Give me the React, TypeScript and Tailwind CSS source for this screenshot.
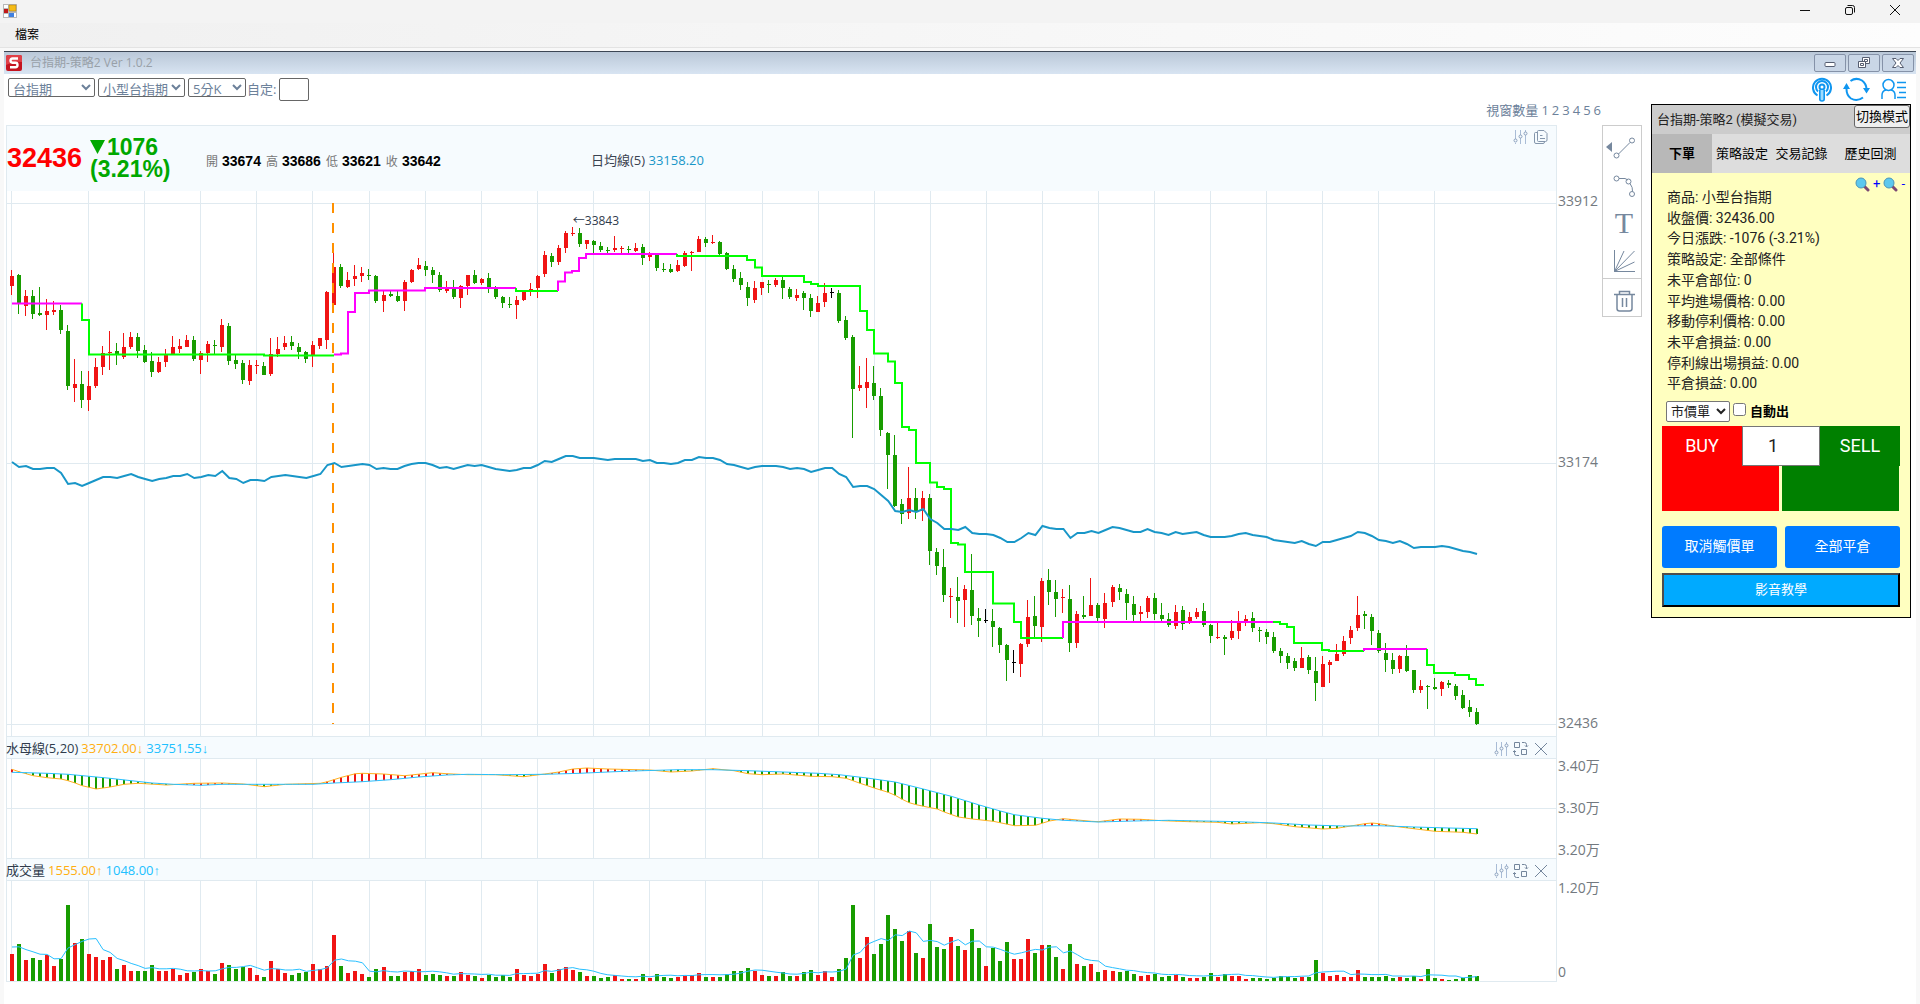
import { useState } from "react";
import type { ReactNode } from "react";

// [color, high, bodyTop, bodyBottom, low]
const CANDLES = `
r 270 276 286 295|g 274 275 303 314|r 290 296 306 316|g 290 296 314 319|g 287 313 315 316|r 299 311 315 330|r 301 310 312 315|g 305 310 330 334|g 325 331 386 390|r 359 384 388 402
g 371 384 400 408|r 371 386 400 411|r 358 367 386 388|r 346 353 367 375|r 331 352 353 370|g 343 351 355 365|r 333 347 357 359|r 332 337 347 349|g 333 337 351 358|g 345 350 362 363
g 352 361 372 377|r 357 362 372 373|r 349 355 362 367|r 336 347 355 355|r 339 346 349 353|r 335 340 347 347|g 336 340 359 361|r 351 353 360 374|r 341 344 353 362|g 340 345 346 354
r 319 325 347 352|g 323 326 361 365|g 355 360 364 369|g 360 363 380 384|r 360 365 381 385|r 360 365 366 374|g 362 366 375 375|r 338 354 374 376|r 337 349 354 357|r 336 343 347 350
g 336 342 346 350|g 343 347 352 359|g 351 352 359 363|r 341 345 355 367|r 338 338 346 349|r 291 292 340 349|r 253 267 305 305|g 264 267 286 288|r 272 280 287 288|r 265 276 279 286
r 267 273 276 282|g 269 275 276 280|g 275 276 301 303|r 291 295 301 312|g 290 294 296 297|g 290 296 301 302|r 280 282 301 311|r 269 270 282 283|r 258 265 269 270|g 261 266 270 276
g 267 270 275 283|g 272 275 290 292|r 281 289 291 293|g 280 288 297 299|r 285 286 298 308|r 275 275 286 295|g 270 275 283 284|r 278 279 283 285|g 273 278 288 293|g 286 288 297 299
g 296 297 303 308|g 297 304 305 308|r 296 300 305 319|r 290 291 300 301|r 283 289 290 296|r 275 276 288 298|r 251 255 274 277|g 253 256 262 267|r 245 248 262 265|r 231 233 248 253
r 227 233 234 236|g 228 233 244 247|r 240 240 244 249|g 240 241 245 253|g 242 246 250 252|g 247 250 251 254|r 236 248 250 252|r 246 248 249 253|g 246 249 250 253|r 243 248 251 252
g 244 247 258 265|r 252 255 257 261|g 254 255 268 271|g 263 269 270 272|g 264 269 272 273|r 260 265 271 272|r 251 253 266 267|r 251 252 253 271|r 236 239 252 252|g 237 239 243 247
r 235 242 243 244|g 241 242 254 255|g 252 253 269 270|g 265 269 279 282|g 272 278 285 290|g 282 287 298 306|r 281 288 300 303|r 282 282 288 295|g 280 284 285 293|r 278 280 285 287
g 277 280 288 299|g 287 289 297 299|r 289 295 298 301|g 291 293 298 310|g 294 298 311 317|r 296 303 312 312|r 283 293 302 307|k 288 292 293 298|g 290 293 321 323|g 316 320 338 340
g 335 337 389 438|r 366 385 388 391|r 358 382 388 408|g 366 383 396 400|g 388 396 430 436|g 432 433 455 489|g 435 455 506 507|g 499 504 514 524|r 467 498 513 519|g 488 498 512 519
r 491 498 511 521|g 494 498 551 565|g 548 552 566 575|g 549 567 595 602|r 588 596 597 618|g 577 597 601 623|r 585 589 600 627|g 554 590 616 625|g 608 618 621 637|k 609 620 621 623
g 609 621 627 647|g 627 628 645 653|g 644 645 660 681|k 650 662 663 673|r 643 644 664 677|r 600 617 644 647|g 596 616 626 637|r 578 581 627 642|g 569 580 592 605|g 580 592 599 617
r 589 597 598 613|g 585 599 643 652|r 611 614 643 648|g 596 615 617 619|r 578 605 616 616|g 603 605 618 623|r 593 603 619 628|r 585 587 602 607|g 584 588 592 600|g 589 594 603 620
g 596 604 615 623|r 606 612 614 621|r 596 598 612 618|g 593 598 614 620|g 603 615 619 621|g 613 619 625 627|r 605 612 626 629|g 606 610 624 630|r 612 617 622 624|r 608 612 617 619
g 603 611 625 627|g 624 625 636 643|r 622 637 638 639|g 635 637 639 655|r 620 631 638 640|r 611 622 631 639|r 615 619 622 626|g 612 618 628 632|g 627 630 631 642|g 629 632 637 644
g 632 637 651 653|g 648 651 656 663|g 653 656 663 669|g 658 661 668 671|r 647 658 668 668|g 655 657 670 674|g 657 671 683 701|r 656 664 687 687|r 660 662 665 683|r 644 654 661 661
r 636 641 654 656|r 626 630 638 644|r 596 615 628 631|g 611 614 616 629|g 614 617 631 645|g 630 633 651 653|g 643 653 660 672|g 653 660 669 674|r 655 656 669 673|g 645 656 671 672
g 670 670 690 693|r 680 686 690 693|g 685 686 687 709|g 678 687 689 690|r 681 682 689 696|g 680 683 685 688|g 684 686 696 700|g 690 695 708 709|g 700 707 712 717|g 708 712 724 725`
  .trim()
  .split(/[|\n]/)
  .map((row) => {
    const [color, ...v] = row.split(" ");
    const [high, top, bottom, low] = v.map(Number);
    return { color, high, top, bottom, low };
  });

const VOLUMES = [
  27, 37, 21, 23, 21, 26, 15, 22, 76, 38, 42, 27, 24, 21, 24, 12, 16, 10, 10, 10,
  16, 10, 10, 12, 6, 8, 9, 12, 10, 7, 18, 16, 12, 14, 13, 6, 4, 20, 12, 8,
  6, 8, 9, 17, 12, 15, 46, 15, 8, 10, 7, 4, 12, 14, 5, 5, 9, 10, 12, 6,
  7, 6, 5, 5, 9, 6, 5, 3, 6, 4, 6, 4, 12, 6, 5, 7, 17, 8, 12, 14,
  11, 9, 5, 5, 3, 4, 6, 2, 2, 2, 7, 3, 7, 4, 3, 4, 5, 6, 8, 4,
  4, 4, 7, 10, 10, 13, 10, 6, 5, 5, 9, 5, 5, 9, 11, 6, 10, 4, 12, 23,
  76, 23, 44, 27, 37, 66, 52, 40, 50, 28, 23, 57, 34, 32, 44, 35, 31, 52, 33, 15,
  33, 20, 39, 22, 22, 42, 28, 36, 36, 24, 12, 37, 17, 15, 17, 9, 11, 10, 9, 10,
  7, 5, 6, 7, 4, 5, 6, 4, 3, 3, 4, 8, 4, 7, 5, 5, 2, 3, 3, 2,
  3, 5, 4, 3, 4, 4, 21, 8, 5, 6, 4, 4, 11, 4, 4, 4, 5, 3, 4, 3,
  5, 2, 12, 3, 2, 1, 2, 3, 6, 5,
];

const DAILY_MA = [
  462, 467, 466, 469, 469, 468, 468, 473, 484, 483, 486, 483, 480, 477, 477, 478, 476, 474, 477, 479,
  481, 479, 478, 476, 476, 474, 478, 477, 475, 476, 471, 478, 479, 483, 480, 480, 481, 477, 476, 475,
  476, 477, 478, 476, 474, 465, 463, 467, 466, 465, 464, 465, 469, 468, 469, 469, 466, 464, 463, 463,
  465, 468, 467, 469, 467, 465, 466, 465, 467, 469, 470, 471, 470, 468, 468, 465, 461, 462, 459, 456,
  456, 458, 458, 458, 459, 460, 459, 459, 459, 459, 461, 460, 463, 463, 464, 463, 460, 460, 457, 458,
  458, 460, 464, 465, 467, 469, 467, 466, 466, 466, 467, 469, 468, 469, 472, 470, 468, 468, 474, 477,
  487, 486, 486, 489, 495, 501, 511, 512, 510, 512, 509, 519, 523, 529, 529, 530, 527, 533, 534, 534,
  535, 538, 542, 542, 538, 533, 535, 526, 528, 529, 529, 538, 533, 533, 531, 533, 530, 527, 528, 530,
  532, 532, 529, 532, 533, 535, 532, 534, 533, 532, 535, 537, 537, 537, 536, 534, 533, 535, 536, 537,
  540, 541, 542, 543, 541, 544, 546, 542, 542, 540, 538, 536, 532, 533, 536, 540, 541, 543, 541, 544,
  548, 547, 547, 547, 546, 547, 549, 551, 552, 554,
];

// [index, y] key points, values between them are interpolated
const FAST_LINE = [
  [0, 39.3], [1, 41.7], [3, 45.7], [5, 47.7], [7, 49], [8, 50.7], [9, 53], [10, 55.7], [11, 57.3], [12, 59],
  [14, 57], [16, 54.3], [18, 53.3], [22, 55], [26, 53.3], [30, 53], [33, 54], [36, 56.7], [39, 54.3], [44, 53.3],
  [45, 51.7], [47, 47.3], [49, 43.7], [50, 43.3], [53, 44], [56, 45.7], [60, 42.7], [62, 43.7], [65, 44.7], [69, 44.7],
  [73, 46.7], [76, 44], [78, 42], [80, 39], [82, 38], [85, 39], [91, 40], [94, 42], [97, 41], [100, 38.7],
  [103, 40.7], [105, 43.7], [107, 44.7], [110, 44], [114, 46.3], [117, 46.7], [119, 48.3], [121, 53.3], [123, 58], [125, 62.3],
  [126, 65.3], [127, 69.3], [128, 72.7], [129, 74.7], [131, 77.7], [132, 79], [133, 82], [135, 87], [137, 89], [140, 91.3],
  [143, 95.7], [146, 95.3], [148, 91], [150, 88.7], [154, 91.3], [155, 91.7], [158, 89], [161, 89.3], [164, 90.7], [168, 91.7],
  [172, 92.3], [174, 94], [178, 92.7], [180, 93.7], [183, 96.7], [187, 99], [189, 98.3], [191, 96], [193, 93.7], [194, 93],
  [195, 93.7], [198, 97], [203, 101.3], [207, 102.3], [209, 104],
];
const SLOW_LINE = [
  [0, 42.3], [5, 43.3], [8, 44.3], [11, 46.3], [14, 48.3], [17, 50.7], [20, 53], [23, 54.3], [27, 55.3], [30, 54.3],
  [43, 54.3], [46, 53], [50, 51.7], [54, 49.7], [58, 47], [62, 45], [65, 44.3], [70, 44.7], [76, 44.3], [81, 43.3],
  [86, 41.7], [90, 40.7], [95, 39.7], [100, 39.7], [105, 40.7], [110, 42], [115, 43.3], [118, 44.7], [122, 48], [126, 52],
  [130, 59], [134, 66.3], [138, 75], [141, 81], [143, 84.7], [147, 88.3], [150, 90.3], [155, 92], [160, 91], [165, 90.3],
  [170, 91], [175, 91.7], [180, 93], [185, 95], [190, 96], [195, 95.7], [200, 97], [205, 98], [209, 98.7],
];

const TREND_LINES = [
  ["#ff00ff", "M5 303.5H75"],
  ["#00ff00", "M75 303.5V320H82V354.5H257V355.5H327"],
  ["#ff00ff", "M327 354.5H334V353.5H341V312H348V293H362V290.5H418V288H509"],
  ["#00ff00", "M509 288V291H551"],
  ["#ff00ff", "M551 291V281.5H558V272.5H565V271H572V258H579V254H670"],
  ["#00ff00", "M670 254V256H740V260H748V267.5H755V276H797V282H804V284H811V286H853V311H860V330H867V353.5H881V361.5H888V383H895V427H902V430H909V463H923V482.5H930V487H937V489H944V543H951V544.5H958V572H986V603.5H1007V622H1014V638H1056"],
  ["#ff00ff", "M1056 638V622H1266"],
  ["#00ff00", "M1266 622H1273V624H1280V627H1287V643H1315V650H1322V651H1357"],
  ["#ff00ff", "M1357 651V649H1420"],
  ["#00ff00", "M1420 649V665H1427V673H1448V675H1462V679H1469V685H1477"],
];

const COLORS: Record<string, string> = { r: "#f01414", g: "#189c00", k: "#000000" };
const WIDTH = 1549;
const PITCH = 7.0096;
const GRID = "#e0eaf0";

const xAt = (i: number) => 5 + i * PITCH;

const GRID_X = [4.5];
for (let i = 11; i <= 203; i += 8) GRID_X.push(Math.floor(xAt(i)) + 0.5 - (i < 51 ? 1 : 0));

function interpolate(points: number[][]) {
  return CANDLES.map((_, i) => {
    const next = points.findIndex((p) => p[0] >= i);
    if (points[next][0] === i) return points[next][1];
    const [x0, y0] = points[next - 1];
    const [x1, y1] = points[next];
    return y0 + ((y1 - y0) * (i - x0)) / (x1 - x0);
  });
}

const toPoints = (ys: number[]) => ys.map((y, i) => `${xAt(i)},${y}`).join(" ");

const fast = interpolate(FAST_LINE);
const slow = interpolate(SLOW_LINE);

// volumes before the first visible bar, needed for the 5 bar average
const history = [36, 35, 34, 33];
const volumeMa = VOLUMES.map((_, i) => {
  const all = [...history, ...VOLUMES].slice(i, i + 5);
  return 100 - all.reduce((a, b) => a + b, 0) / 5;
});

function Grid({ top, bottom, rows }: { top: number; bottom: number; rows: number[] }) {
  return (
    <g stroke={GRID}>
      {GRID_X.map((x) => (
        <line key={x} x1={x} x2={x} y1={top} y2={bottom} />
      ))}
      {rows.map((y) => (
        <line key={y} x1={0} x2={WIDTH} y1={y} y2={y} />
      ))}
    </g>
  );
}

function PriceChart() {
  return (
    <div className="relative">
      <svg viewBox={`0 191 ${WIDTH} 545`} preserveAspectRatio="none" className="block w-full h-[545px]">
        <Grid top={191} bottom={736} rows={[203.5, 463.5, 724.5]} />
        {CANDLES.map((c, i) => {
          const x = Math.round(xAt(i));
          return (
            <g key={i} fill={COLORS[c.color]}>
              <rect x={x - 1} y={c.high} width={1} height={c.low - c.high} />
              <rect x={x - 2} y={c.top} width={4} height={Math.max(1, c.bottom - c.top)} />
            </g>
          );
        })}
        <line x1={326} x2={326} y1={203} y2={724} stroke="#ff9000" strokeWidth={2} strokeDasharray="10 10" />
        {TREND_LINES.map(([color, d]) => (
          <path key={d} d={d} fill="none" stroke={color} strokeWidth={2} />
        ))}
        <polyline points={toPoints(DAILY_MA)} fill="none" stroke="#1896c8" strokeWidth={2} />
      </svg>
      <span
        className="absolute top-[20px] text-[12px] leading-[20px] text-[#2f3b4c]"
        style={{ left: `${(xAt(80) / WIDTH) * 100}%` }}
      >
        ←33843
      </span>
    </div>
  );
}

function JellyfishChart() {
  return (
    <svg viewBox={`0 0 ${WIDTH} 100`} preserveAspectRatio="none" className="block w-full h-[100px]">
      <g transform="translate(0 -28)">
        <Grid top={28} bottom={128} rows={[28.5, 78.5]} />
        {fast.map((f, i) => (
          <rect
            key={i}
            x={Math.round(xAt(i)) - 1}
            y={Math.min(f, slow[i])}
            width={2}
            height={Math.abs(f - slow[i])}
            fill={f < slow[i] ? COLORS.r : COLORS.g}
          />
        ))}
        <polyline points={toPoints(fast)} fill="none" stroke="#ffb01e" strokeWidth={1} />
        <polyline points={toPoints(slow)} fill="none" stroke="#28c0ff" strokeWidth={1} />
      </g>
    </svg>
  );
}

function VolumeChart() {
  return (
    <svg viewBox={`0 0 ${WIDTH} 101`} preserveAspectRatio="none" className="block w-full h-[101px]">
      <Grid top={0} bottom={101} rows={[0.5]} />
      {VOLUMES.map((v, i) => (
        <rect
          key={i}
          x={Math.round(xAt(i)) - 2}
          y={101 - v}
          width={4}
          height={v}
          fill={CANDLES[i].color === "g" ? COLORS.g : COLORS.r}
        />
      ))}
      <polyline points={toPoints(volumeMa)} fill="none" stroke="#28c0ff" strokeWidth={1} />
    </svg>
  );
}

function SlidersIcon() {
  return (
    <svg width="15" height="16" viewBox="0 0 15 16" fill="none" stroke="#8ba0bd">
      <path d="M2.5 1v9M2.5 14v1M7.5 1v5M7.5 9v6M12.5 1v2M12.5 6v9" stroke="#a9bcd6" />
      <circle cx="2.5" cy="11.5" r="1.5" />
      <circle cx="7.5" cy="7.5" r="1.5" />
      <circle cx="12.5" cy="4.5" r="1.5" />
    </svg>
  );
}

function PanelHeader({ children }: { children: ReactNode }) {
  return (
    <div className="flex items-center justify-between h-[22px] bg-[#f6fbfe] border-t border-[#e0eaf0] text-[13px] pt-[2px] pr-[7px] whitespace-nowrap">
      <div className="-ml-px flex gap-[3px]">{children}</div>
      <div className="flex items-center gap-1">
        <button aria-label="參數設定">
          <SlidersIcon />
        </button>
        <button aria-label="切換指標">
          <svg width="16" height="16" viewBox="0 0 16 16" fill="none" stroke="#74869c">
            <path d="M1.500 1.500h5v5h-5zM8.500 8.500h5v5h-5zM9 1.500h2.500q2 0 2 2V5.500M12 4.500l1.500 1.500L15 4.500M6 14.500H3.500q-2 0-2-2V10M0 11l1.500-1.500L3 11" />
          </svg>
        </button>
        <button aria-label="關閉">
          <svg width="16" height="16" viewBox="0 0 16 16" stroke="#74869c">
            <path d="M2 2l12 12M14 2L2 14" />
          </svg>
        </button>
      </div>
    </div>
  );
}

function Trend({ value, arrow, className }: { value: string; arrow: string; className: string }) {
  return (
    <span className={className}>
      {value}
      <span className="font-['Liberation_Sans',sans-serif] font-bold">{arrow}</span>
    </span>
  );
}

function DrawingTools() {
  return (
    <div className="w-10 shrink-0 self-start border border-[#ccc] text-[#76889e]">
      <div className="flex flex-col">
        <button aria-label="線段" className="flex h-[42px] items-center pl-[3px]">
          <svg width="30" height="24" viewBox="0 0 30 24" fill="none" stroke="#76889e">
            <path d="M6 7v10L0 12z" fill="#76889e" stroke="none" />
            <path d="M12.500 19L24 7.500" />
            <circle cx="10.500" cy="20.500" r="2.500" />
            <circle cx="26" cy="5.500" r="2.500" />
          </svg>
        </button>
        <button aria-label="曲線" className="flex h-9 items-center pl-[10px]">
          <svg width="24" height="24" viewBox="0 0 24 24" fill="none" stroke="#76889e">
            <path d="M6 4.500h6l3 1.500M17 9.500q3 4 2.500 8" />
            <circle cx="3.500" cy="4.500" r="2.500" />
            <circle cx="15.500" cy="7.500" r="2.500" />
            <circle cx="19" cy="20" r="2.500" />
          </svg>
        </button>
        <button aria-label="文字" className="h-[38px] font-['Liberation_Serif',serif] text-[30px] leading-[38px] pl-1">
          T
        </button>
        <button aria-label="扇形線" className="flex h-9 items-center pl-[10px] pt-[2px]">
          <svg width="22" height="24" viewBox="0 0 22 24" fill="none" stroke="#76889e">
            <path d="M1.500 1v21.500H22M1.500 22.500L11 2M1.500 22.500L21.500 2M1.500 22.500L21.500 13" />
          </svg>
        </button>
        <button aria-label="清除" className="flex h-[38px] items-center border-t border-[#ccc] pl-[11px] pt-[6px]">
          <svg width="21" height="22" viewBox="0 0 21 22" fill="none" stroke="#76889e">
            <path d="M0 4.500h21M5.500 4V1.500h10V4" strokeWidth="1.500" />
            <path d="M3 5v13.500q0 2.500 2.500 2.500h10q2.500 0 2.500-2.500V5" strokeWidth="1.500" />
            <path d="M8.500 8v9M12.500 8v9" strokeWidth="1.500" />
          </svg>
        </button>
      </div>
    </div>
  );
}

function SearchIcon() {
  return (
    <svg width="15" height="15" viewBox="0 0 15 15">
      <path d="M9 9l4 4" stroke="#7c4a72" strokeWidth="3" strokeLinecap="round" />
      <circle cx="6" cy="6" r="5" fill="#5cc8ee" stroke="#4a94b8" strokeWidth="1" />
    </svg>
  );
}

const INFO = [
  "商品: 小型台指期",
  "收盤價: 32436.00",
  "今日漲跌: -1076 (-3.21%)",
  "策略設定: 全部條件",
  "未平倉部位: 0",
  "平均進場價格: 0.00",
  "移動停利價格: 0.00",
  "未平倉損益: 0.00",
  "停利線出場損益: 0.00",
  "平倉損益: 0.00",
];

const TABS = ["下單", "策略設定", "交易記錄", "歷史回測"];

function OrderPanel() {
  const [tab, setTab] = useState("下單");
  const [quantity, setQuantity] = useState("1");

  return (
    <aside className="w-[260px] shrink-0 self-start border border-black bg-[#ffffc0] font-['Roboto','Noto_Sans_CJK_TC',sans-serif] text-[#222]">
      <div className="flex h-[29px] items-start justify-between bg-[#ccc] pl-[5px]">
        <h2 className="text-[13px] leading-[29px]">台指期-策略2 (模擬交易)</h2>
        <button className="h-[23px] w-[56px] rounded-[3px] border border-[#666] bg-[#efefef] text-[13px] leading-5 whitespace-nowrap text-black">
          切換模式
        </button>
      </div>
      <div className="grid grid-cols-[60px_60px_59px_79px] h-[39px] bg-[#ddd] text-[13px] text-black">
        {TABS.map((t) => (
          <button
            key={t}
            onClick={() => setTab(t)}
            className={t === tab ? "bg-[#b8b8b8] font-bold" : "whitespace-nowrap"}
          >
            {t}
          </button>
        ))}
      </div>
      <div className="px-[10px] pb-[10px]">
        <div className="-mr-2 flex h-[22px] items-center justify-end gap-[3px] pr-[3px] text-[13px] text-[#00f]">
          <button className="flex items-center gap-[3px]" aria-label="放大">
            <SearchIcon />+
          </button>
          <button className="flex items-center gap-[3px]" aria-label="縮小">
            <SearchIcon />-
          </button>
        </div>
        <ul className="grid auto-rows-fr h-[207px] -mt-2 pl-[5px] text-[14px] leading-[20px]">
          {INFO.map((line) => (
            <li key={line}>{line}</li>
          ))}
        </ul>
        <div className="flex h-8 items-center pt-[3px] pl-1">
          <select
            aria-label="委託方式"
            className="h-[21px] w-[64px] rounded-[2px] border border-[#767676] bg-white text-[13px] leading-4"
          >
            <option>市價單</option>
          </select>
          <input id="auto-exit" type="checkbox" className="ml-[3px] mb-1 size-[13px]" />
          <label htmlFor="auto-exit" className="ml-1 text-[13px] font-bold text-black">
            自動出
          </label>
        </div>
        <div className="flex h-10 text-[18px] text-white">
          <button className="w-20 bg-[#f00] pb-[2px]">BUY</button>
          <input
            aria-label="口數"
            value={quantity}
            onChange={(e) => setQuantity(e.target.value)}
            className="w-[78px] min-w-0 border border-[#767676] bg-white pr-4 pb-[2px] text-center text-[#222]"
          />
          <button className="w-20 bg-[#008000] pb-[2px]">SELL</button>
        </div>
        <div className="flex gap-[3px] h-[45px] pr-[1px]">
          <div className="flex-1 bg-[#f00]" />
          <div className="flex-1 bg-[#008000]" />
        </div>
        <div className="mt-[15px] flex h-[42px] gap-2 text-[14px] text-white">
          <button className="flex-1 rounded-[3px] bg-[#007bff] pb-[2px]">取消觸價單</button>
          <button className="flex-1 rounded-[3px] bg-[#007bff] pb-[2px]">全部平倉</button>
        </div>
        <button className="mt-[5px] h-[34px] w-full border-2 border-t-[#4d4d4d] border-l-[#4d4d4d] border-b-black border-r-black bg-[#00aaff] text-[13px] text-white">
          影音教學
        </button>
      </div>
    </aside>
  );
}

function TitleBar() {
  return (
    <header className="flex h-[23px] items-start justify-between bg-[#f3f3f3]">
      <svg width="14" height="14" viewBox="0 0 14 14" className="ml-[3px] mt-1">
        <path d="M0 0h14v14H0z" fill="#b8b8b8" />
        <path d="M1 1h4v3H1zM1 10h4v3H1zM11 9h2v4h-2z" fill="#fff" />
        <path d="M6 1h7v6H6z" fill="#f5bc18" stroke="#a87808" strokeWidth="0.500" />
        <path d="M1 5h4v4H1z" fill="#c01818" />
        <path d="M6 9h5v4H6z" fill="#4080e0" />
      </svg>
      <div className="flex h-5 items-center gap-[33px] pr-[19px]">
        <button aria-label="最小化">
          <svg width="12" height="12" viewBox="0 0 12 12" stroke="#111">
            <path d="M1 6.500h10" />
          </svg>
        </button>
        <button aria-label="還原">
          <svg width="12" height="12" viewBox="0 0 12 12" fill="none" stroke="#111">
            <rect x="1.500" y="3.500" width="7" height="7" rx="1.500" />
            <path d="M3.500 1.500h5q2 0 2 2v5" />
          </svg>
        </button>
        <button aria-label="關閉視窗">
          <svg width="12" height="12" viewBox="0 0 12 12" stroke="#111">
            <path d="M1 1l10 10M11 1L1 11" />
          </svg>
        </button>
      </div>
    </header>
  );
}

const MDI_BUTTON =
  "flex h-[18px] w-8 items-center justify-center rounded-[2px] border border-[#8592a8] bg-[#c9d6e6]";

function ChildTitleBar() {
  return (
    <div className="flex h-[23px] items-center border-t border-[#3c4654] bg-linear-to-b from-[#bac8d8] to-[#d8e4f2] pl-[2px] pr-[2px]">
      <svg width="16" height="16" viewBox="0 0 16 16">
        <rect width="16" height="16" rx="2" fill="#c41420" />
        <path d="M0 2q0-2 2-2h12q2 0 2 2v5Q8 6 0 10z" fill="#e04048" />
        <path d="M12 3.500H6.500q-2 0-2 2t2 2.300h3q2 0 2 2.200t-2 2.200H4" fill="none" stroke="#fff" strokeWidth="2.400" />
      </svg>
      <span className="ml-2 flex-1 text-[12px] text-[#98a0a8]">台指期-策略2 Ver 1.0.2</span>
      <div className="flex gap-[2px] pb-px">
        <button aria-label="最小化子視窗" className={MDI_BUTTON}>
          <svg width="12" height="12" viewBox="0 0 12 12">
            <rect x="1" y="5.500" width="10" height="4" rx="1" fill="#fff" stroke="#555d70" />
          </svg>
        </button>
        <button aria-label="還原子視窗" className={MDI_BUTTON}>
          <svg width="12" height="12" viewBox="0 0 12 12" fill="#fff" stroke="#555d70">
            <path d="M4.500 0.500h7v6h-7zM6.500 2.500h3v2h-3z" />
            <path d="M0.500 4.500h7v6h-7zM2.500 6.500h3v2h-3z" />
          </svg>
        </button>
        <button aria-label="關閉子視窗" className={MDI_BUTTON}>
          <svg width="12" height="10" viewBox="0 0 12 10" fill="#fff" stroke="#555d70">
            <path d="M0.500 0.500h3.500l2 2 2-2h3.500L8 5l3.500 4.500H8l-2-2-2 2H0.500L4 5z" />
          </svg>
        </button>
      </div>
    </div>
  );
}

function Toolbar() {
  const select = "h-[19px] rounded-[2px] border border-[#666] bg-white leading-4";
  return (
    <div className="flex h-[30px] items-start justify-between pt-1 pl-1 pr-[9px] text-[13px] text-[#6c819a]">
      <div className="flex items-start">
        <select aria-label="商品" className={select + " w-[87px]"}>
          <option>台指期</option>
        </select>
        <select aria-label="合約" className={select + " ml-[3px] w-[87px]"}>
          <option>小型台指期</option>
        </select>
        <select aria-label="週期" className={select + " ml-[3px] w-[58px]"}>
          <option>5分K</option>
        </select>
        <label htmlFor="custom" className="ml-[1px] w-8 leading-[23px] whitespace-nowrap">
          自定:
        </label>
        <input id="custom" className="h-[23px] w-[30px] rounded-[2px] border border-[#666]" />
      </div>
      <div className="-mt-px flex items-start gap-[11px]">
        <button aria-label="廣播">
          <svg width="20" height="25" viewBox="0 0 20 25" fill="none" stroke="#1096f0">
            <path d="M5.500 18.500a9 9 0 1 1 9 0" strokeWidth="2" />
            <path d="M6 14.500a6 6 0 1 1 8 0" strokeWidth="2" />
            <circle cx="10" cy="10" r="2.500" strokeWidth="2" />
            <path d="M7.800 13v9q0 2 2.200 2t2.200-2v-9" strokeWidth="1.600" fill="#9edcff" />
          </svg>
        </button>
        <button aria-label="重新整理">
          <svg width="27" height="25" viewBox="0 0 27 25" fill="none" stroke="#1096f0" strokeWidth="2">
            <path d="M7.500 4Q13 0 19 3.500q4 3 4.500 8M20 20.500Q14 25 8 21.500q-4.500-3-4.500-9.500" />
            <path d="M0 12l3.500-6L7 12zM20 11h7l-3.500 5.500z" fill="#1096f0" stroke="none" />
          </svg>
        </button>
        <button aria-label="會員">
          <svg width="26" height="25" viewBox="0 0 26 25" fill="none" stroke="#1096f0" strokeWidth="1.500">
            <circle cx="7.500" cy="8" r="5.500" />
            <path d="M1 22v-4q0-4 4-5M10 13q4 1 4 5v4M16 5.500h9M16 10.500h9M18 15.500h7M16 20.500h9" />
          </svg>
        </button>
      </div>
    </div>
  );
}

const OHLC = [
  ["開", "33674"],
  ["高", "33686"],
  ["低", "33621"],
  ["收", "33642"],
];

function QuoteHeader() {
  return (
    <div className="flex h-[65px] bg-[#f6fbfe]">
      <div className="w-[76px] pt-4 font-['Liberation_Sans',sans-serif] text-[27px] leading-[32px] font-bold text-[#f00]">
        32436
      </div>
      <div className="ml-[7px] w-[116px] pt-[10px] font-['Liberation_Sans',sans-serif] text-[23px] leading-[22px] font-bold text-[#00a800]">
        <div className="flex items-center">
          <svg width="15" height="14" viewBox="0 0 15 14" className="mr-[2px]">
            <path d="M0 0h15L7.500 14z" fill="#00a800" />
          </svg>
          1076
        </div>
        <div>(3.21%)</div>
      </div>
      <dl className="flex w-[385px] items-center gap-[5px] pt-[6px] text-[12px] text-[#777]">
        {OHLC.map(([name, value]) => (
          <div key={name} className="flex items-center gap-1">
            <dt>{name}</dt>
            <dd className="font-['Liberation_Sans',sans-serif] text-[14px] font-bold text-black">{value}</dd>
          </div>
        ))}
      </dl>
      <div className="flex-1 pt-6 text-[13px] leading-[20px] text-[#3a4250]">
        日均線(5) <span className="text-[#1896c8]">33158.20</span>
      </div>
      <div className="flex items-start gap-[6px] pt-[3px] pr-2">
        <button aria-label="指標設定">
          <SlidersIcon />
        </button>
        <button aria-label="複製">
          <svg width="14" height="16" viewBox="0 0 14 16" fill="none" stroke="#8496ac">
            <path d="M3.500 3.500H1.500q-1 0-1 1V13q0 1.500 1.500 1.500h7q1.500 0 1.500-1.500v-.5" />
            <path d="M4.500 1.500h5.500l3 3v6.500q0 1.500-1.500 1.500h-7q-1 0-1-1v-9q0-1 1-1zM6 6.500h2.500M6 9.500h5" />
          </svg>
        </button>
      </div>
    </div>
  );
}

function PriceAxis() {
  return (
    <div className="flex w-[45px] shrink-0 flex-col pl-px text-[14px] leading-[18px] text-[#737980]">
      <div className="mt-[67px] flex h-[540px] flex-col justify-between">
        <span>33912</span>
        <span>33174</span>
        <span>32436</span>
      </div>
      <div className="mt-[25px] flex h-[102px] flex-col justify-between">
        <span>3.40万</span>
        <span>3.30万</span>
        <span>3.20万</span>
      </div>
      <div className="mt-[20px] flex h-[102px] flex-col justify-between">
        <span>1.20万</span>
        <span>0</span>
      </div>
    </div>
  );
}

export default function App() {
  return (
    <div className="flex min-h-screen flex-col bg-white font-['Open_Sans','Noto_Sans_CJK_TC',sans-serif]">
      <TitleBar />
      <nav className="flex h-6 items-center bg-linear-to-r from-[#f0f0f0] to-[#fdfdfd] pl-[15px]">
        <button className="text-[12px] text-black">檔案</button>
      </nav>
      <div className="flex flex-1 flex-col border-t border-[#e3e3e3] bg-[#f8f8f8] pt-[3px] pl-1 pr-1">
        <ChildTitleBar />
        <main className="flex flex-1 flex-col bg-white">
          <Toolbar />
          <div className="flex pl-[2px] pr-[5px]">
            <div className="min-w-0 flex-1 mr-[9px]">
              <div className="flex h-[21px] justify-end gap-[3px] pr-[41px] text-[13px] leading-[13px] text-[#6c819a]">
                <span>視窗數量</span>
                {["1", "2", "3", "4", "5", "6"].map((n) => (
                  <button key={n} className="h-[13px]">
                    {n}
                  </button>
                ))}
              </div>
              <div className="flex">
                <section className="min-w-0 flex-1 border border-[#e0eaf0]">
                  <QuoteHeader />
                  <PriceChart />
                  <PanelHeader>
                    <span className="text-[#2f3b4c]">水母線(5,20)</span>
                    <Trend className="text-[#ffae10]" value="33702.00" arrow="↓" />
                    <Trend className="text-[#20c0ff]" value="33751.55" arrow="↓" />
                  </PanelHeader>
                  <JellyfishChart />
                  <PanelHeader>
                    <span className="text-[#2f3b4c]">成交量</span>
                    <Trend className="text-[#ffae10]" value="1555.00" arrow="↑" />
                    <Trend className="text-[#20c0ff]" value="1048.00" arrow="↑" />
                  </PanelHeader>
                  <VolumeChart />
                </section>
                <PriceAxis />
                <DrawingTools />
              </div>
            </div>
            <OrderPanel />
          </div>
        </main>
      </div>
    </div>
  );
}
